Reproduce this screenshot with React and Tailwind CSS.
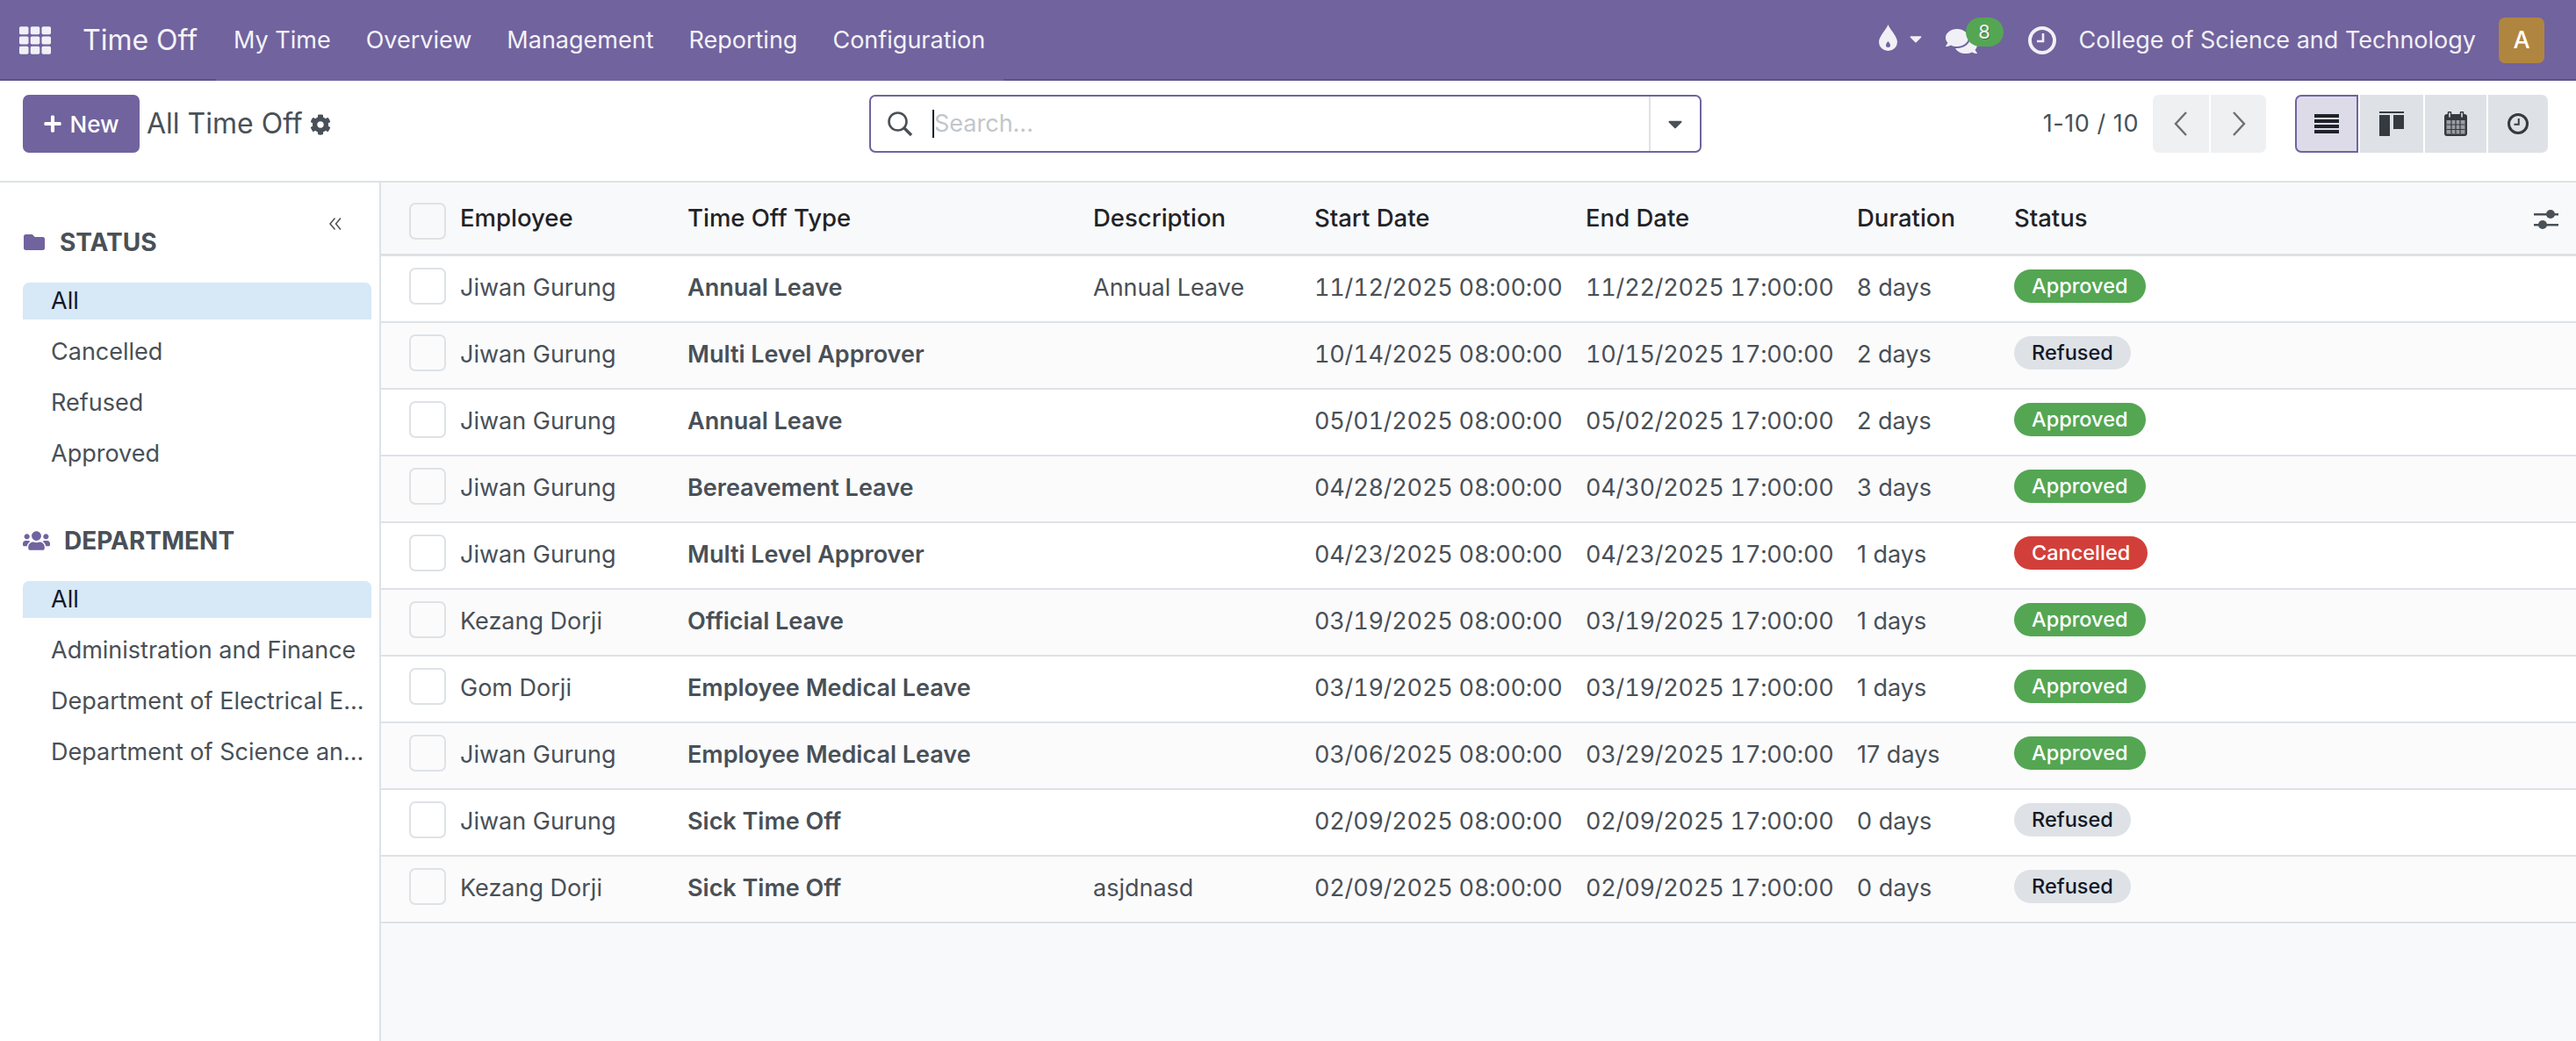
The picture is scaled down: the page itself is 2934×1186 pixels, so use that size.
import { FaTh, FaCog, FaCaretDown, FaFolder, FaUsers, FaComments, FaPlus } from "react-icons/fa";

const menu = ["My Time", "Overview", "Management", "Reporting", "Configuration"];

const rows = [
  { name: "Jiwan Gurung", type: "Annual Leave", desc: "Annual Leave", start: "11/12/2025 08:00:00", end: "11/22/2025 17:00:00", days: "8 days", status: "Approved" },
  { name: "Jiwan Gurung", type: "Multi Level Approver", desc: "", start: "10/14/2025 08:00:00", end: "10/15/2025 17:00:00", days: "2 days", status: "Refused" },
  { name: "Jiwan Gurung", type: "Annual Leave", desc: "", start: "05/01/2025 08:00:00", end: "05/02/2025 17:00:00", days: "2 days", status: "Approved" },
  { name: "Jiwan Gurung", type: "Bereavement Leave", desc: "", start: "04/28/2025 08:00:00", end: "04/30/2025 17:00:00", days: "3 days", status: "Approved" },
  { name: "Jiwan Gurung", type: "Multi Level Approver", desc: "", start: "04/23/2025 08:00:00", end: "04/23/2025 17:00:00", days: "1 days", status: "Cancelled" },
  { name: "Kezang Dorji", type: "Official Leave", desc: "", start: "03/19/2025 08:00:00", end: "03/19/2025 17:00:00", days: "1 days", status: "Approved" },
  { name: "Gom Dorji", type: "Employee Medical Leave", desc: "", start: "03/19/2025 08:00:00", end: "03/19/2025 17:00:00", days: "1 days", status: "Approved" },
  { name: "Jiwan Gurung", type: "Employee Medical Leave", desc: "", start: "03/06/2025 08:00:00", end: "03/29/2025 17:00:00", days: "17 days", status: "Approved" },
  { name: "Jiwan Gurung", type: "Sick Time Off", desc: "", start: "02/09/2025 08:00:00", end: "02/09/2025 17:00:00", days: "0 days", status: "Refused" },
  { name: "Kezang Dorji", type: "Sick Time Off", desc: "asjdnasd", start: "02/09/2025 08:00:00", end: "02/09/2025 17:00:00", days: "0 days", status: "Refused" },
];

const badgeColors = {
  Approved: "bg-[#54a653] text-white",
  Refused: "bg-[#dee2e6] text-[#111827]",
  Cancelled: "bg-[#d23f3a] text-white",
};

const gridCols = "grid grid-cols-[90px_259px_462px_252px_309px_309px_179px_1fr] items-center";

function ClockIcon({ size, stroke = 4 }) {
  return (
    <svg width={size} height={size} viewBox="0 0 32 32" fill="none" stroke="currentColor">
      <circle cx="16" cy="16" r={16 - stroke / 2} strokeWidth={stroke} />
      <path d="M17 8v9h-7" strokeWidth="2.6" />
    </svg>
  );
}

function CalendarIcon() {
  return (
    <svg width="26" height="28" viewBox="0 0 26 28">
      <rect x="0" y="3" width="26" height="25" rx="3" fill="#343a40" />
      <path d="M6 1.5v5M20 1.5v5" stroke="#343a40" strokeWidth="4.5" strokeLinecap="round" />
      <path d="M6 2v4M20 2v4" stroke="#dee2e6" strokeWidth="1.6" strokeLinecap="round" />
      <path d="M2.5 10h21v15.5h-21z" fill="#9a9ea3" />
      <path d="M2.5 15h21M2.5 20.5h21M8 10v15.5M13 10v15.5M18 10v15.5" stroke="#343a40" strokeWidth="1.2" fill="none" />
    </svg>
  );
}

function Checkbox() {
  return <span className="block w-[42px] h-[42px] rounded-[7px] border-2 border-[#dee2e6]" />;
}

function FilterItem({ label, active }) {
  return (
    <div
      className={`h-[42px] mb-[16px] pl-[32px] flex items-center whitespace-nowrap rounded-t-[7px] ${
        active ? "bg-[#d7e8f6] text-[#111827]" : "text-[#495057]"
      }`}
    >
      {label}
    </div>
  );
}

export default function App() {
  return (
    <div className="w-[2934px] h-[1186px] flex flex-col overflow-hidden bg-white text-[27px] text-[#495057] font-['Inter','Liberation_Sans',sans-serif]">
      {/* navbar */}
      <header className="relative h-[92px] shrink-0 bg-[#71639e] text-white flex items-center">
        <FaTh className="ml-[22px] w-[36px] h-[36px] text-[#f1f0f6]" />
        <span className="ml-[36px] text-[32px] text-[#f4f3f8]">Time Off</span>
        <nav className="ml-[41px] flex gap-[40px] text-[#f4f3f8]">
          {menu.map((m) => (
            <span key={m}>{m}</span>
          ))}
        </nav>
        <div className="ml-auto flex items-center text-[#f1f0f6]">
          <svg className="mb-[6px]" width="21" height="30" viewBox="0 0 21 30">
            <path fillRule="evenodd" fill="currentColor" d="M10.5 0C12 5 21 13 21 20a10.5 10 0 0 1-21 0C0 13 9 5 10.5 0zM10.5 19c-1.5 2-2.5 3-2.5 4.5a2.5 2.5 0 0 0 5 0c0-1.5-1-2.5-2.5-4.5z" />
          </svg>
          <FaCaretDown className="ml-[10px] w-[22px] h-[22px] mb-[4px]" />
          <div className="relative ml-[22px] w-[38px] h-[30px]">
            <FaComments className="w-[38px] h-[32px]" />
            <span className="absolute left-[24px] top-[-11px] w-[43px] h-[33px] rounded-full bg-[#54a653] text-[22px] flex items-center justify-center text-[#f1f0f6] [text-shadow:1px_1px_0_#3b7a3a]">
              8
            </span>
          </div>
          <span className="ml-[57px]">
            <ClockIcon size={32} />
          </span>
          <span className="ml-[26px]">College of Science and Technology</span>
          <span className="ml-[26px] mr-[36px] w-[52px] h-[52px] rounded-[7px] bg-[#b0853f] text-white font-medium flex items-center justify-center">
            A
          </span>
        </div>
        <span className="absolute left-0 bottom-0 w-[246px] h-[2px] bg-[#5f5386]" />
        <span className="absolute left-[1143px] right-0 bottom-0 h-[2px] bg-[#5f5386]" />
      </header>

      {/* control panel */}
      <div className="h-[116px] shrink-0 border-b-2 border-[#dee2e6] relative flex items-start pt-[16px]">
        <button className="ml-[26px] w-[133px] h-[66px] rounded-[7px] bg-[#71639e] text-white text-[26px] font-medium flex items-center justify-center gap-[8px]">
          <FaPlus className="w-[22px] h-[22px]" />
          New
        </button>
        <span className="ml-[8px] h-[66px] flex items-center text-[32px] text-[#495057]">All Time Off</span>
        <FaCog className="ml-[8px] mt-[22px] w-[24px] h-[24px] text-[#495057]" />
        <div className="absolute left-[990px] top-[16px] w-[948px] h-[66px] rounded-[7px] border-2 border-[#71639e] flex items-center">
          <svg className="ml-[18px] w-[30px] h-[30px] text-[#495057]" viewBox="0 0 30 30" fill="none" stroke="currentColor" strokeWidth="2.6">
            <circle cx="12.5" cy="12.5" r="10" />
            <path d="M20 20l8 8" strokeWidth="3.4" />
          </svg>
          <span className="ml-[22px] w-[2px] h-[32px] bg-[#111827]" />
          <span className="text-[#c2c6cc]">Search...</span>
          <div className="ml-auto w-[58px] h-full border-l-2 border-[#dee2e6] flex items-center justify-center">
            <FaCaretDown className="w-[26px] h-[26px] text-[#495057]" />
          </div>
        </div>
        <div className="ml-auto flex items-center h-[66px] mr-[32px]">
          <span className="mr-[16px] tracking-[0.55px]">1-10 / 10</span>
          <div className="flex gap-[2px] mr-[33px] text-[#6b7075]">
            <span className="w-[64px] h-[66px] rounded-l-[7px] bg-[#eff0f2] flex items-center justify-center">
              <svg width="18" height="30" viewBox="0 0 18 30" fill="none" stroke="currentColor" strokeWidth="2.4"><path d="M15 2L3 15l12 13" /></svg>
            </span>
            <span className="w-[63px] h-[66px] rounded-r-[7px] bg-[#eff0f2] flex items-center justify-center">
              <svg width="18" height="30" viewBox="0 0 18 30" fill="none" stroke="currentColor" strokeWidth="2.4"><path d="M3 2l12 13L3 28" /></svg>
            </span>
          </div>
          <div className="flex gap-[2px] text-[#343a40]">
            <span className="w-[72px] h-[66px] rounded-l-[7px] border-2 border-[#71639e] bg-[#dedbe9] flex items-center justify-center">
              <svg width="28" height="22" viewBox="0 0 28 22" fill="#1f2328"><path d="M0 0h28v4H0zM0 6h28v4H0zM0 12h28v4H0zM0 18h28v4H0z" /></svg>
            </span>
            <span className="w-[72px] h-[66px] bg-[#dee2e6] flex items-center justify-center">
              <svg width="28" height="28" viewBox="0 0 28 28" fill="currentColor"><path d="M0 0h28v2H0zM0 4h12v24H0zM16 4h12v16H16z" /></svg>
            </span>
            <span className="w-[70px] h-[66px] bg-[#dee2e6] flex items-center justify-center">
              <CalendarIcon />
            </span>
            <span className="w-[68px] h-[66px] rounded-r-[7px] bg-[#dee2e6] flex items-center justify-center">
              <ClockIcon size={24} />
            </span>
          </div>
        </div>
      </div>

      <div className="flex-1 flex min-h-0">
        {/* sidebar */}
        <aside className="relative w-[434px] shrink-0 border-r-2 border-[#dee2e6] pl-[26px] pr-[9px] pt-[51px]">
          <svg className="absolute left-[374px] top-[39px] w-[16px] h-[16px] text-[#495057]" viewBox="0 0 16 16" fill="none" stroke="currentColor" strokeWidth="1.5">
            <path d="M7.5 1.5L2 8l5.5 6.5M14 1.5L8.5 8l5.5 6.5" />
          </svg>
          <div className="flex items-center gap-[16px] h-[34px] mb-[29px] text-[28px] font-bold text-[#495057]">
            <FaFolder className="w-[26px] h-[24px] text-[#71639e]" />
            STATUS
          </div>
          <FilterItem label="All" active />
          <FilterItem label="Cancelled" />
          <FilterItem label="Refused" />
          <FilterItem label="Approved" />
          <div className="flex items-center gap-[16px] h-[34px] mt-[61px] mb-[29px] text-[28px] font-bold text-[#495057]">
            <FaUsers className="w-[31px] h-[30px] text-[#71639e]" />
            DEPARTMENT
          </div>
          <FilterItem label="All" active />
          <FilterItem label="Administration and Finance" />
          <FilterItem label="Department of Electrical E..." />
          <FilterItem label="Department of Science an..." />
        </aside>

        {/* list */}
        <main className="flex-1 min-w-0 bg-[#f8f9fa]">
          <div className={`${gridCols} relative h-[84px] border-b-[3px] border-[#dee2e6] text-[27.5px] font-medium text-[#1f2328]`}>
            <span className="pl-[32px] pt-[7px]"><Checkbox /></span>
            <span>Employee</span>
            <span>Time Off Type</span>
            <span>Description</span>
            <span>Start Date</span>
            <span>End Date</span>
            <span>Duration</span>
            <span>Status</span>
            <svg className="absolute right-[20px] top-[29px] w-[28px] h-[26px] text-[#495057]" viewBox="0 0 28 26" fill="currentColor">
              <path d="M0 6h28v2.4H0zM0 18h28v2.4H0z" />
              <circle cx="19" cy="7" r="5" />
              <circle cx="10" cy="19" r="5" />
            </svg>
          </div>
          {rows.map((r, i) => (
            <div
              key={i}
              className={`${gridCols} h-[76px] pb-[1px] border-b-2 border-[#dee2e6] ${i % 2 ? "bg-[#fbfbfc]" : "bg-white"}`}
            >
              <span className="pl-[32px] pb-[5px]"><Checkbox /></span>
              <span>{r.name}</span>
              <span className="font-semibold">{r.type}</span>
              <span>{r.desc}</span>
              <span className="tabular-nums tracking-[-0.2px]">{r.start}</span>
              <span className="tabular-nums tracking-[-0.2px]">{r.end}</span>
              <span>{r.days}</span>
              <span className="flex pb-[5px]">
                <span className={`inline-flex items-center h-[38px] px-[20px] rounded-full text-[23.5px] font-medium ${badgeColors[r.status]}`}>
                  {r.status}
                </span>
              </span>
            </div>
          ))}
        </main>
      </div>
    </div>
  );
}
